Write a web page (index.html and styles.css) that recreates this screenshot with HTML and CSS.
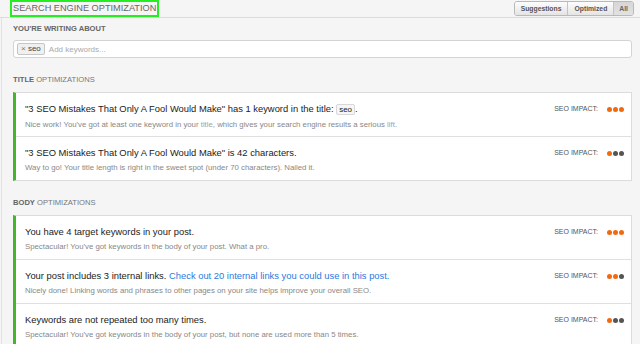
FILE: index.html
```html
<!DOCTYPE html>
<html lang="en">
  <head>
    <meta charset="UTF-8" />
    <title>Search Engine Optimization</title>
    <link rel="stylesheet" href="styles.css">
  </head>
  <body>
    <!-- Top bar -->
    <div class="topbar">
      <h1 class="page-title">SEARCH ENGINE OPTIMIZATION</h1>
      <div class="filters">
        <button class="filter">Suggestions</button>
        <button class="filter">Optimized</button>
        <button class="filter selected">All</button>
      </div>
    </div>

    <div class="content">
      <!-- Keywords -->
      <h2 class="label"><b>YOU'RE WRITING ABOUT</b></h2>
      <div class="keywords">
        <span class="tag"><span class="tag-x">&times;</span> seo</span>
        <span class="placeholder">Add keywords...</span>
      </div>

      <!-- Title optimizations -->
      <h2 class="label"><b>TITLE</b> OPTIMIZATIONS</h2>
      <div class="group">
        <div class="item">
          <div class="item-text">
            <p class="item-title">"3 SEO Mistakes That Only A Fool Would Make" has 1 keyword in the title: <span class="kw">seo</span>.</p>
            <p class="item-note">Nice work! You've got at least one keyword in your <span class="hl">title</span>, which gives your search engine results a serious <span class="hl">lift</span>.</p>
          </div>
          <div class="impact">SEO IMPACT: <span class="dots"><i class="on"></i><i class="on"></i><i class="on"></i></span></div>
        </div>
        <div class="item">
          <div class="item-text">
            <p class="item-title">"3 SEO Mistakes That Only A Fool Would Make" is 42 characters.</p>
            <p class="item-note">Way to go! Your title length is right in the sweet spot (under 70 characters). Nailed it.</p>
          </div>
          <div class="impact">SEO IMPACT: <span class="dots"><i class="on"></i><i></i><i></i></span></div>
        </div>
      </div>

      <!-- Body optimizations -->
      <h2 class="label"><b>BODY</b> OPTIMIZATIONS</h2>
      <div class="group">
        <div class="item">
          <div class="item-text">
            <p class="item-title">You have 4 target keywords in your post.</p>
            <p class="item-note">Spectacular! You've got keywords in the body of your post. What a pro.</p>
          </div>
          <div class="impact">SEO IMPACT: <span class="dots"><i class="on"></i><i class="on"></i><i class="on"></i></span></div>
        </div>
        <div class="item">
          <div class="item-text">
            <p class="item-title">Your post includes 3 internal links. <a href="#">Check out 20 internal links you could use in this post.</a></p>
            <p class="item-note">Nicely done! Linking words and phrases to other pages on your site helps improve your overall SEO.</p>
          </div>
          <div class="impact">SEO IMPACT: <span class="dots"><i class="on"></i><i class="on"></i><i></i></span></div>
        </div>
        <div class="item">
          <div class="item-text">
            <p class="item-title">Keywords are not repeated too many times.</p>
            <p class="item-note">Spectacular! You've got keywords in the body of your post, but none are used more than 5 times.</p>
          </div>
          <div class="impact">SEO IMPACT: <span class="dots"><i class="on"></i><i></i><i></i></span></div>
        </div>
      </div>
    </div>
  </body>
</html>
```

FILE: styles.css
```css
/* General */
body {
  margin: 0;
  background: #f5f5f5;
  font-family: "Liberation Sans", Arial, sans-serif;
  color: #333;
  height: 344px;
  overflow: hidden;
}

p {
  margin: 0;
}

/* Top bar */
.topbar {
  display: flex;
  justify-content: space-between;
  align-items: flex-start;
  height: 17px;
  border-bottom: 1px solid #dcdcdc;
  padding: 0 6px 0 10px;
}

.page-title {
  margin: 0;
  height: 17px;
  box-sizing: border-box;
  padding: 0 1px;
  border: 2px solid #22ee22;
  font-size: 9.2px;
  font-weight: normal;
  line-height: 13px;
  color: #666;
}

.filters {
  display: flex;
  margin-top: 1px;
  border: 1px solid #b9b9b9;
  border-radius: 3px;
  overflow: hidden;
}

.filter {
  font-family: inherit;
  font-size: 6.8px;
  font-weight: bold;
  color: #555;
  height: 13px;
  padding: 0 6px;
  border: 0;
  border-left: 1px solid #c4c4c4;
  background: linear-gradient(#fdfdfd, #e4e4e4);
  line-height: 13px;
}

.filter:first-child {
  border-left: 0;
}

.filter.selected {
  background: linear-gradient(#d6d6d6, #e2e2e2);
  color: #666;
  padding: 0 5px;
}

/* Content */
.content {
  border-left: 1px solid #e2e2e2;
  margin-left: 1px;
  padding: 0 8px 0 11px;
}

.label {
  margin: 0;
  padding: 0 0 7px;
  font-size: 7.6px;
  font-weight: normal;
  line-height: 10px;
  color: #777;
}

.label b {
  color: #666;
}

.content > .label:first-child {
  padding-top: 6px;
  padding-bottom: 6px;
}

/* Keyword input */
.keywords {
  display: flex;
  align-items: center;
  gap: 4px;
  height: 18px;
  box-sizing: border-box;
  padding: 0 3px;
  background: #fff;
  border: 1px solid #d4d4d4;
  border-radius: 3px;
  margin-bottom: 17px;
}

.tag {
  font-size: 8px;
  line-height: 10px;
  color: #444;
  background: #f0f0f0;
  border: 1px solid #c6c6c6;
  border-radius: 2px;
  padding: 0 3px;
}

.tag-x {
  color: #777;
}

.placeholder {
  font-size: 8px;
  color: #aaa;
}

/* Optimization groups */
.group {
  background: #fff;
  border: 1px solid #dcdcdc;
  border-left: 3px solid #47b52b;
  margin-bottom: 17px;
}

.item {
  display: flex;
  justify-content: space-between;
  align-items: flex-start;
  height: 43px;
  box-sizing: border-box;
  padding: 9px 7px 0 9px;
}

.item + .item {
  height: 44px;
  border-top: 1px solid #e0e0e0;
}

.item-title {
  font-size: 9.4px;
  line-height: 14px;
  color: #222;
}

.item-title a {
  color: #2a7ae0;
  text-decoration: none;
}

.kw {
  border: 1px solid #d8d8d8;
  border-radius: 2px;
  background: #f6f6f6;
  font-size: 8px;
  padding: 0 2px;
}

.item-note {
  font-size: 7.8px;
  line-height: 12px;
  color: #888;
  margin-top: 2px;
}

.hl {
  color: #b0a090;
}

.impact {
  display: flex;
  align-items: center;
  gap: 9px;
  font-size: 7px;
  line-height: 14px;
  color: #555;
  white-space: nowrap;
}

.dots {
  display: flex;
  gap: 1px;
}

.dots i {
  width: 5px;
  height: 5px;
  border-radius: 50%;
  background: #555;
}

.dots i.on {
  background: #f26a10;
}
```
